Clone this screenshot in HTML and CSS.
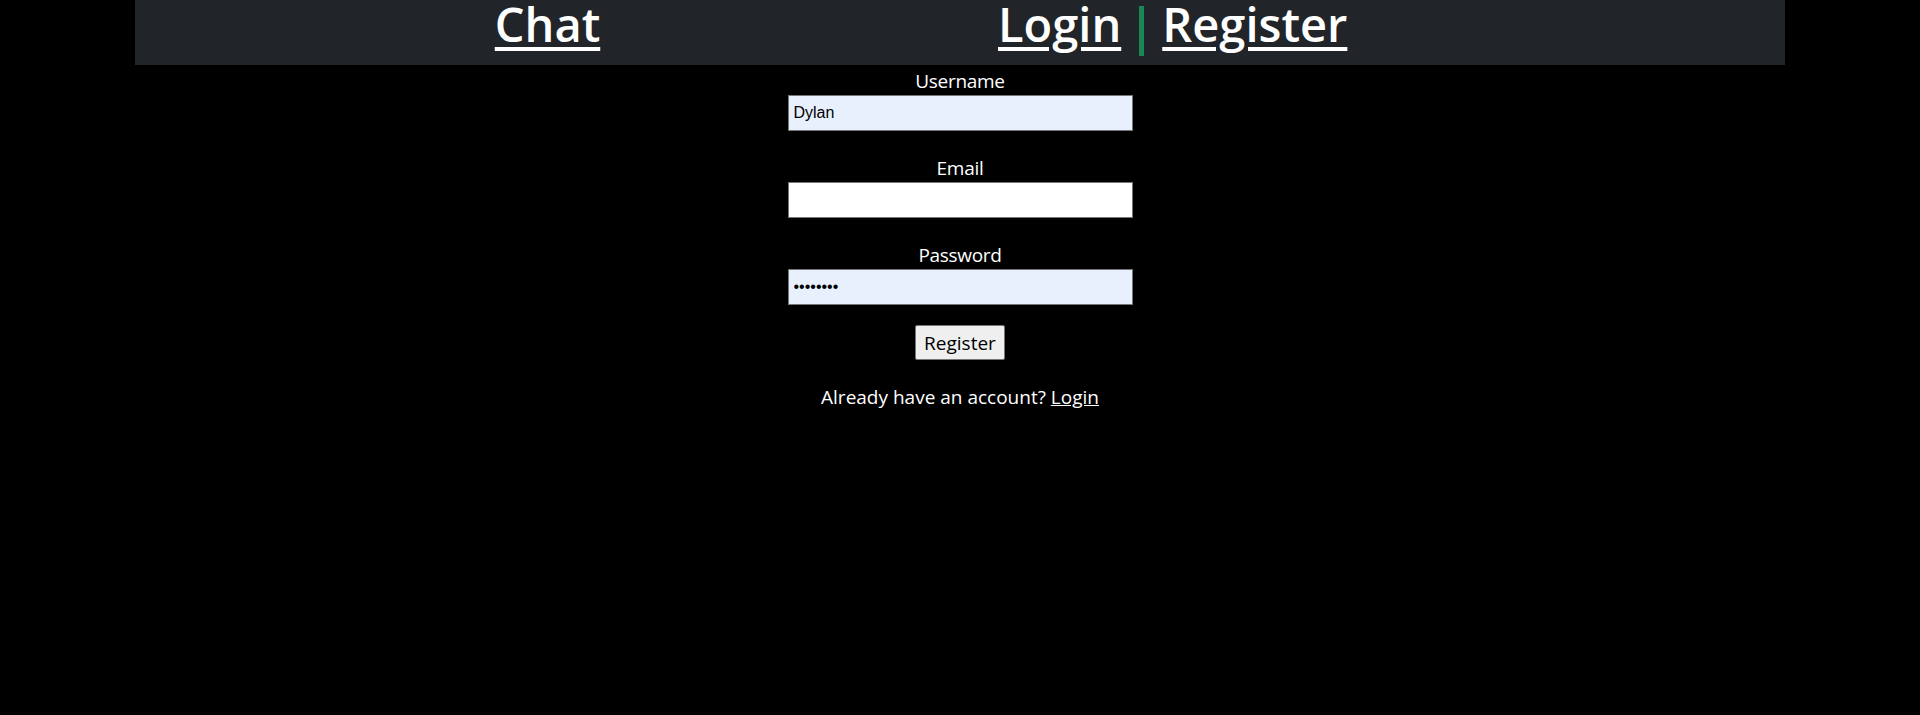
FILE: index.html
```html
<!DOCTYPE html>
<html>
<head>
<meta charset="utf-8">
<link rel="stylesheet" href="styles.css">
</head>
<body>
<header class="topbar">
  <div class="brand-col"><a class="nav-link" href="#">Chat</a></div>
  <div class="auth-col">
    <a class="nav-link" href="#">Login</a>
    <span class="sep"></span>
    <a class="nav-link" href="#">Register</a>
  </div>
</header>
<main class="form">
  <label class="label" for="u">Username</label>
  <input class="field autofill" id="u" type="text" value="Dylan">
  <label class="label" for="e">Email</label>
  <input class="field" id="e" type="text" value="">
  <label class="label" for="p">Password</label>
  <input class="field autofill last" id="p" type="password" value="password">
  <button class="btn" type="button">Register</button>
  <p class="footnote">Already have an account? <a class="inline-link" href="#">Login</a></p>
</main>
</body>
</html>
```
FILE: styles.css
```css
html, body {
  margin: 0;
  padding: 0;
  background: #000;
  color: #fff;
  font-family: "Open Sans", "Noto Sans", sans-serif;
}
.topbar {
  width: 1650px;
  height: 65px;
  margin: 0 auto;
  background: #212529;
  display: grid;
  grid-template-columns: 1fr 1fr;
  align-items: start;
}
.brand-col {
  display: flex;
  justify-content: center;
}
.auth-col {
  display: flex;
  align-items: flex-start;
  padding-left: 38px;
  gap: 18px;
}
.nav-link {
  color: #fff;
  font-size: 47px;
  font-weight: 600;
  line-height: 48px;
  text-decoration: underline;
  text-decoration-thickness: 4px;
  text-underline-offset: 5px;
}
.sep {
  display: block;
  width: 5px;
  height: 50px;
  margin-top: 6px;
  background: #198754;
}
.form {
  display: flex;
  flex-direction: column;
  align-items: center;
  padding-top: 2px;
}
.label {
  font-size: 19px;
  line-height: 28px;
  letter-spacing: -0.3px;
}
.field {
  box-sizing: border-box;
  width: 345px;
  height: 36px;
  margin: 0 0 23px;
  padding: 1px 5px;
  border: 1px solid #767676;
  border-radius: 0;
  background: #fff;
  color: #000;
  font-family: "Liberation Sans", Arial, sans-serif;
  font-size: 16px;
}
.field.autofill {
  background: #e8f0fe;
}
.field.last {
  margin-bottom: 20px;
}
.btn {
  box-sizing: border-box;
  width: 90px;
  height: 35px;
  padding: 0;
  background: #efefef;
  border: 1px solid #767676;
  border-radius: 2px;
  color: #000;
  font-family: "Open Sans", "Noto Sans", sans-serif;
  font-size: 19px;
}
.footnote {
  margin: 23px 0 0;
  font-size: 19px;
  line-height: 28px;
}
.inline-link {
  color: #fff;
  text-decoration: underline;
}
```
